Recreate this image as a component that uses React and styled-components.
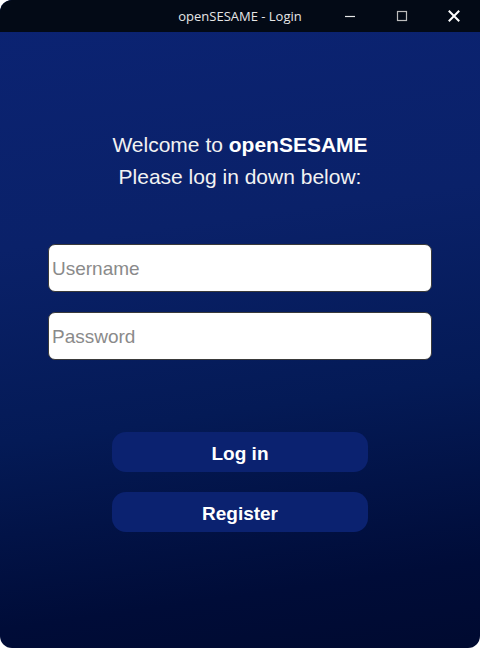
import React from "react";
import styled, { createGlobalStyle } from "styled-components";

const Global = createGlobalStyle`
  html, body { margin: 0; padding: 0; background: #ffffff; }
  #root { width: 480px; height: 648px; }
`;

const Window = styled.div`
  width: 480px;
  height: 648px;
  display: flex;
  flex-direction: column;
  border-radius: 12px 0 12px 12px;
  overflow: hidden;
  background: linear-gradient(172deg, #0b2373 0%, #0a2169 35%, #041a56 62%, #000c38 88%, #000a30 100%);
`;

const TitleBar = styled.div`
  height: 32px;
  flex: 0 0 32px;
  background: #030a16;
  position: relative;
  display: flex;
  align-items: center;
  justify-content: center;
`;

const Title = styled.span`
  font-family: "Open Sans", "DejaVu Sans", sans-serif;
  font-size: 13px;
  color: #e6e6e6;
`;

const Controls = styled.div`
  position: absolute;
  right: 0;
  top: 0;
  height: 32px;
  display: flex;
  align-items: center;
`;

const Ctrl = styled.div`
  width: 52px;
  height: 32px;
  display: flex;
  align-items: center;
  justify-content: center;
`;

const Body = styled.div`
  flex: 1;
  display: flex;
  flex-direction: column;
  align-items: center;
  padding-top: 97px;
  font-family: "Liberation Sans", Arial, sans-serif;
`;

const Heading = styled.div`
  color: #f2f2f2;
  font-size: 21px;
  line-height: 32px;
  text-align: center;
  b { font-weight: 700; color: #ffffff; }
`;

const Fields = styled.div`
  margin-top: 51px;
  display: flex;
  flex-direction: column;
  gap: 20px;
`;

const Input = styled.input`
  box-sizing: border-box;
  width: 384px;
  height: 48px;
  border: 1px solid #3a3a3a;
  border-radius: 7px;
  background: #ffffff;
  padding: 2px 3px 0;
  font-family: "Liberation Sans", Arial, sans-serif;
  font-size: 19px;
  color: #222;
  outline: none;
  &::placeholder { color: #8a8a8a; }
`;

const Buttons = styled.div`
  margin-top: 72px;
  display: flex;
  flex-direction: column;
  gap: 20px;
`;

const Button = styled.button`
  width: 256px;
  height: 40px;
  border: none;
  border-radius: 14px;
  background: #0b2270;
  color: #ffffff;
  padding: 3px 0 0;
  font-family: "Liberation Sans", Arial, sans-serif;
  font-weight: 700;
  font-size: 19px;
  cursor: pointer;
`;

export default function App() {
  return (
    <>
      <Global />
      <Window>
        <TitleBar>
          <Title>openSESAME - Login</Title>
          <Controls>
            <Ctrl>
              <svg width="12" height="12" viewBox="0 0 12 12">
                <line x1="1" y1="6.5" x2="11" y2="6.5" stroke="#e8e8e8" strokeWidth="1.2" />
              </svg>
            </Ctrl>
            <Ctrl>
              <svg width="12" height="12" viewBox="0 0 12 12">
                <rect x="1.5" y="1.5" width="9" height="9" fill="none" stroke="#bdbdbd" strokeWidth="1.2" />
              </svg>
            </Ctrl>
            <Ctrl>
              <svg width="12" height="12" viewBox="0 0 12 12">
                <path d="M1.5 1.5 L10.5 10.5 M10.5 1.5 L1.5 10.5" stroke="#ffffff" strokeWidth="2" strokeLinecap="square" />
              </svg>
            </Ctrl>
          </Controls>
        </TitleBar>
        <Body>
          <Heading>
            Welcome to <b>openSESAME</b>
            <br />
            Please log in down below:
          </Heading>
          <Fields>
            <Input type="text" placeholder="Username" />
            <Input type="password" placeholder="Password" />
          </Fields>
          <Buttons>
            <Button>Log in</Button>
            <Button>Register</Button>
          </Buttons>
        </Body>
      </Window>
    </>
  );
}
